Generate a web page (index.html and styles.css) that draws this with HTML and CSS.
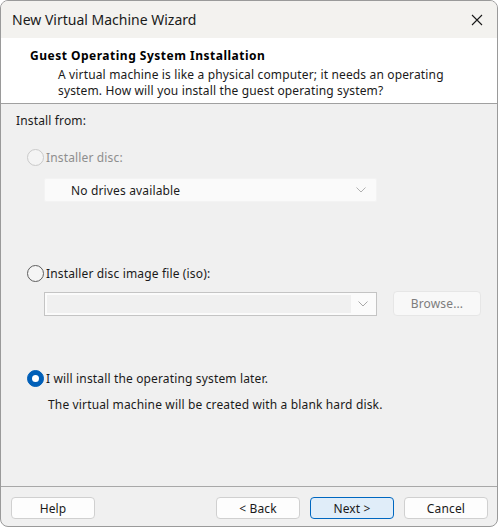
FILE: index.html
```html
<!DOCTYPE html>
<html>
<head>
<meta charset="utf-8">
<link rel="stylesheet" href="styles.css">
</head>
<body>
<div class="window">
  <div class="titlebar">
    <span class="title">New Virtual Machine Wizard</span>
    <svg class="close" width="12" height="12" viewBox="0 0 12 12"><path d="M1 1L11 11M11 1L1 11" stroke="#1a1a1a" stroke-width="1.1" fill="none"/></svg>
  </div>
  <div class="header">
    <div class="h-title">Guest Operating System Installation</div>
    <div class="h-desc">A virtual machine is like a physical computer; it needs an operating system. How will you install the guest operating system?</div>
  </div>
  <div class="content">
    <div class="label">Install from:</div>
    <div class="radio-row row1 disabled"><span class="radio"></span><span>Installer disc:</span></div>
    <div class="combo combo-disabled">
      <span class="combo-text">No drives available</span>
      <svg class="chev" width="10" height="6" viewBox="0 0 10 6"><path d="M0.5 0.5L5 5L9.5 0.5" stroke="#b0b0b0" fill="none"/></svg>
    </div>
    <div class="radio-row row2"><span class="radio"></span><span>Installer disc image file (iso):</span></div>
    <div class="iso-row">
      <div class="combo combo-edit">
        <div class="edit-field"></div>
        <div class="edit-arrow"><svg width="10" height="6" viewBox="0 0 10 6"><path d="M0.5 0.5L5 5L9.5 0.5" stroke="#a8a8a8" fill="none"/></svg></div>
      </div>
      <div class="btn btn-disabled browse">Browse...</div>
    </div>
    <div class="radio-row row3"><span class="radio checked"></span><span>I will install the operating system later.</span></div>
    <div class="note">The virtual machine will be created with a blank hard disk.</div>
  </div>
  <div class="footer">
    <div class="btn">Help</div>
    <div class="spacer"></div>
    <div class="btn">&lt; Back</div>
    <div class="btn primary">Next &gt;</div>
    <div class="btn">Cancel</div>
  </div>
</div>
</body>
</html>
```
FILE: styles.css
```css
* { box-sizing: border-box; }
html, body { margin: 0; padding: 0; background: #ffffff; }
body {
  font-family: "Noto Sans", "Liberation Sans", sans-serif;
  font-size: 12px;
  letter-spacing: 0.15px;
  color: #1a1a1a;
}
.window {
  width: 498px;
  height: 527px;
  border: 1px solid #9a9a9a;
  border-radius: 8px;
  overflow: hidden;
  display: flex;
  flex-direction: column;
  background: #f0f0f0;
}
.titlebar {
  height: 37px;
  flex: none;
  background: #f3f2ef;
  display: flex;
  align-items: center;
  justify-content: space-between;
  padding: 0 14px 0 11px;
}
.title { font-size: 14px; letter-spacing: 0; color: #1a1a1a; }
.close { display: block; }
.header {
  height: 66px;
  flex: none;
  background: #ffffff;
  border-bottom: 1px solid #a0a0a0;
  padding: 10px 0 0 29px;
}
.h-title { font-weight: bold; line-height: 16px; color: #000; letter-spacing: 0.5px; }
.h-desc {
  margin: 3px 0 0 28px;
  width: 410px;
  line-height: 16px;
}
.content {
  flex: 1;
  padding: 9px 0 0 15px;
}
.label { line-height: 16px; }
.radio-row {
  display: flex;
  align-items: center;
  height: 18px;
  margin-left: 11px;
  gap: 2px;
}
.row1 { margin-top: 19px; }
.row2 { margin-top: 62px; }
.row3 { margin-top: 53px; }
.disabled { color: #8e8e8e; }
.radio {
  width: 17px;
  height: 17px;
  border-radius: 50%;
  border: 1px solid #5e5e5e;
  background: #f5f5f5;
  flex: none;
  position: relative;
}
.disabled .radio { border-color: #cacaca; background: #f4f4f4; }
.radio.checked {
  background: #005fb8;
  border-color: #005fb8;
}
.radio.checked::after {
  content: "";
  position: absolute;
  left: 4px; top: 4px;
  width: 7px; height: 7px;
  border-radius: 50%;
  background: #ffffff;
}
.combo {
  width: 333px;
  height: 24px;
  display: flex;
  align-items: center;
}
.combo-disabled {
  margin: 12px 0 0 28px;
  background: #fafafa;
  border: 1px solid #f3f3f3;
  border-radius: 2px;
  justify-content: space-between;
  padding: 0 10px 0 26px;
}
.combo-text { color: #1a1a1a; }
.chev { display: block; }
.iso-row {
  display: flex;
  align-items: center;
  margin: 9px 0 0 28px;
  gap: 16px;
}
.combo-edit {
  border: 1px solid #c4c4c4;
  background: #fbfbfb;
  padding: 2px;
}
.edit-field {
  flex: 1;
  height: 18px;
  background: #f0f0f0;
}
.edit-arrow {
  width: 23px;
  display: flex;
  justify-content: center;
  align-items: center;
}
.edit-arrow svg { display: block; }
.btn {
  width: 84px;
  height: 22px;
  border: 1px solid #d0d0d0;
  border-radius: 4px;
  background: #fdfdfd;
  display: flex;
  align-items: center;
  justify-content: center;
  color: #1a1a1a;
}
.browse { width: 88px; height: 25px; }
.btn-disabled {
  background: #f8f8f8;
  border-color: #e6e6e6;
  color: #7d7d7d;
}
.note {
  margin: 10px 0 0 32px;
  line-height: 16px;
}
.footer {
  height: 40px;
  flex: none;
  border-top: 1px solid #a8a8a8;
  display: flex;
  align-items: flex-start;
  padding: 10px 9px 0 10px;
  gap: 10px;
}
.spacer { flex: 1; }
.primary {
  background: #e0edf9;
  border-color: #0067c0;
}
```
